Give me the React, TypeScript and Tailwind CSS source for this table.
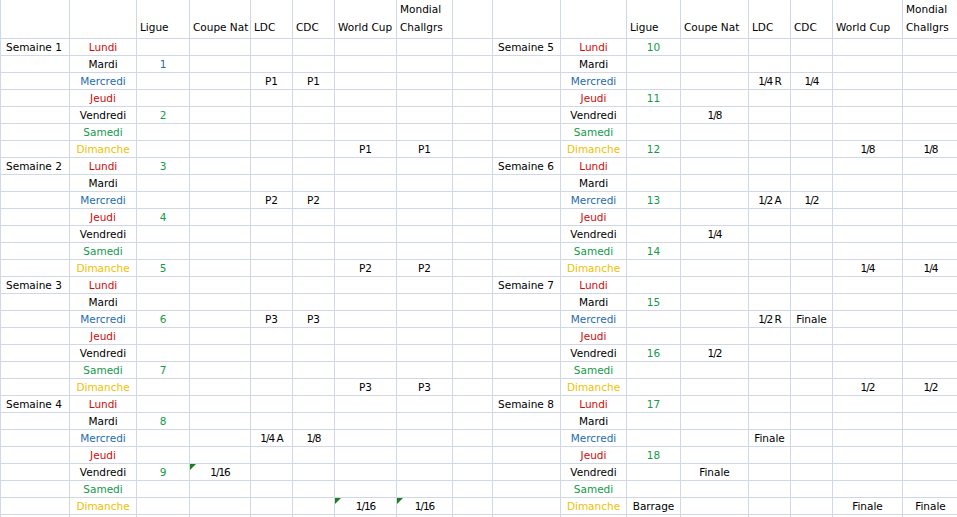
type Day = "Lundi" | "Mardi" | "Mercredi" | "Jeudi" | "Vendredi" | "Samedi" | "Dimanche";

type Row = {
    week?: string;
    day: Day;
    ligue?: string;
    coupe?: string;
    ldc?: string;
    cdc?: string;
    wc?: string;
    mc?: string;
    flags?: string[];
};

const dayColor: Record<Day, string> = {
    Lundi: "text-[#d10a0a]",
    Mardi: "text-black",
    Mercredi: "text-[#1f6cad]",
    Jeudi: "text-[#d10a0a]",
    Vendredi: "text-black",
    Samedi: "text-[#139a4a]",
    Dimanche: "text-[#f0c000]",
};

const days: Day[] = ["Lundi", "Mardi", "Mercredi", "Jeudi", "Vendredi", "Samedi", "Dimanche"];

// one week = 7 rows, values keyed by day index
const week = (n: number, cells: Partial<Record<number, Partial<Row>>>): Row[] =>
    days.map((day, i) => ({
        day,
        week: i === 0 ? `Semaine ${n}` : undefined,
        ...(cells[i] || {}),
    }));

const left: Row[] = [
    ...week(1, {
        1: { ligue: "1" },
        2: { ldc: "P1", cdc: "P1" },
        4: { ligue: "2" },
        6: { wc: "P1", mc: "P1" },
    }),
    ...week(2, {
        0: { ligue: "3" },
        2: { ldc: "P2", cdc: "P2" },
        3: { ligue: "4" },
        6: { ligue: "5", wc: "P2", mc: "P2" },
    }),
    ...week(3, {
        2: { ligue: "6", ldc: "P3", cdc: "P3" },
        5: { ligue: "7" },
        6: { wc: "P3", mc: "P3" },
    }),
    ...week(4, {
        1: { ligue: "8" },
        2: { ldc: "1/4 A", cdc: "1/8" },
        4: { ligue: "9", coupe: "1/16", flags: ["coupe"] },
        6: { wc: "1/16", mc: "1/16", flags: ["wc", "mc"] },
    }),
];

const right: Row[] = [
    ...week(5, {
        0: { ligue: "10" },
        2: { ldc: "1/4 R", cdc: "1/4" },
        3: { ligue: "11" },
        4: { coupe: "1/8" },
        6: { ligue: "12", wc: "1/8", mc: "1/8" },
    }),
    ...week(6, {
        2: { ligue: "13", ldc: "1/2 A", cdc: "1/2" },
        4: { coupe: "1/4" },
        5: { ligue: "14" },
        6: { wc: "1/4", mc: "1/4" },
    }),
    ...week(7, {
        1: { ligue: "15" },
        2: { ldc: "1/2 R", cdc: "Finale" },
        4: { ligue: "16", coupe: "1/2" },
        6: { wc: "1/2", mc: "1/2" },
    }),
    ...week(8, {
        0: { ligue: "17" },
        2: { ldc: "Finale" },
        3: { ligue: "18" },
        4: { coupe: "Finale" },
        6: { ligue: "Barrage", wc: "Finale", mc: "Finale" },
    }),
];

const cell = "relative h-[17px] border-r border-b border-[#d0d7e5] leading-[16px] whitespace-nowrap";

const Flag = () => (
    <span className="absolute top-0 left-0 w-0 h-0 border-t-[6px] border-r-[6px] border-t-[#1d7f1d] border-r-transparent" />
);

const Val = ({ v, flag }: { v?: string; flag?: boolean }) => (
    <div className={`${cell} text-center`}>
        {flag && <Flag />}
        <span className={v && v.includes("/") ? "tracking-[-1px]" : ""}>{v}</span>
    </div>
);

const Half = ({ r, first }: { r: Row; first?: boolean }) => {
    const ligueColor = r.ligue === "Barrage" ? "text-black" : r.ligue === "1" ? "text-[#1f6cad]" : "text-[#139a4a]";
    return (
        <>
            <div className={`${cell} pl-[5px] ${first ? "border-l" : ""}`}>{r.week}</div>
            <div className={`${cell} text-center ${dayColor[r.day]}`}>{r.day}</div>
            <div className={`${cell} text-center ${ligueColor}`}>{r.ligue}</div>
            <Val v={r.coupe} flag={r.flags?.includes("coupe")} />
            <Val v={r.ldc} />
            <Val v={r.cdc} />
            <Val v={r.wc} flag={r.flags?.includes("wc")} />
            <Val v={r.mc} flag={r.flags?.includes("mc")} />
        </>
    );
};

const head = "h-[39px] border-r border-b border-[#d0d7e5] flex flex-col justify-end pl-[3px] pb-[2px] leading-[18px] whitespace-nowrap";

const Header = ({ first }: { first?: boolean }) => (
    <>
        <div className={`${head} ${first ? "border-l" : ""}`} />
        <div className={head} />
        <div className={head}>Ligue</div>
        <div className={head}>Coupe Nat</div>
        <div className={head}>LDC</div>
        <div className={head}>CDC</div>
        <div className={head}>World Cup</div>
        <div className={head}>
            <span>Mondial</span>
            <span>Challgrs</span>
        </div>
    </>
);

export default function App() {
    return (
        <div className="w-[957px] h-[517px] overflow-hidden bg-white text-black font-['DejaVu_Sans',sans-serif] text-[10.5px]">
            <div className="grid grid-cols-[70px_67px_53px_61px_42px_42px_62px_56px_40px_68px_66px_54px_68px_42px_42px_70px_56px]">
                <Header first />
                <div className={head} />
                <Header />

                {left.map((r, i) => (
                    <div key={i} className="contents">
                        <Half r={r} first />
                        <div className={cell} />
                        <Half r={right[i]} />
                    </div>
                ))}

                {Array.from({ length: 17 }).map((_, i) => (
                    <div key={`e${i}`} className={`${cell} ${i === 0 ? "border-l" : ""}`} />
                ))}
            </div>
        </div>
    );
}
